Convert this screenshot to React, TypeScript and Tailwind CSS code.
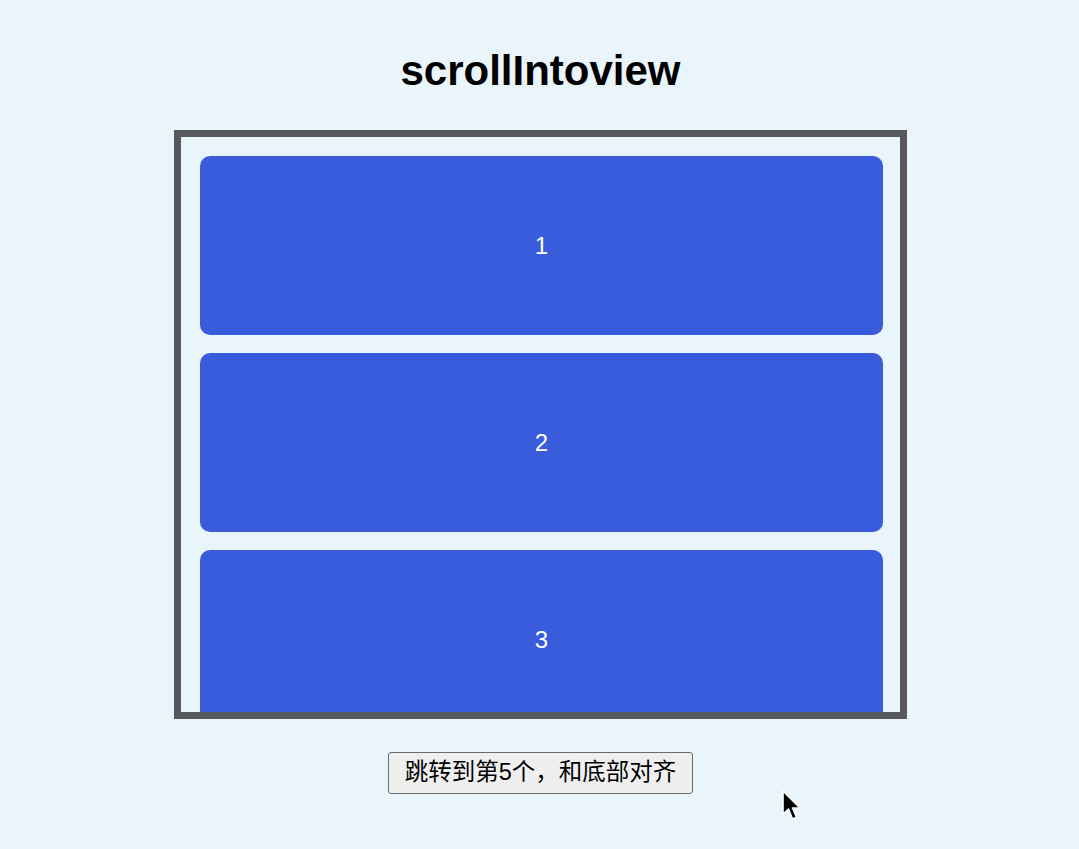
import { useRef } from 'react';

const items = [1, 2, 3, 4, 5, 6];

export default function App() {
  const boxRef = useRef<HTMLDivElement>(null);

  const jump = () => {
    const el = boxRef.current?.querySelector('[data-idx="5"]');
    el?.scrollIntoView({ block: 'end', behavior: 'smooth' });
  };

  return (
    <div className="relative min-h-[849px] bg-[#eaf4fb] flex flex-col items-center font-['Liberation_Sans','Noto_Sans_CJK_SC',sans-serif]">
      <h1 className="mt-[44px] ml-[2px] text-[42px] leading-[54px] font-bold text-black">scrollIntoview</h1>

      <div
        ref={boxRef}
        className="mt-[32px] ml-[2px] w-[733px] h-[589px] border-[7px] border-[#58595c] overflow-hidden py-[19px] pl-[19px] pr-[17px] flex flex-col gap-[18px]"
      >
        {items.map((n) => (
          <div
            key={n}
            data-idx={n}
            className="shrink-0 h-[179px] rounded-[10px] bg-[#385cdb] flex items-center justify-center text-white text-[24px]"
          >
            {n}
          </div>
        ))}
      </div>

      <button
        onClick={jump}
        className="mt-[33px] ml-[2px] h-[42px] px-[16px] border border-[#6b6b6b] rounded-[3px] bg-[#efefef] text-[23.5px] leading-none text-black"
      >
        跳转到第5个，和底部对齐
      </button>

      <svg className="absolute left-[781px] top-[790px]" width="22" height="32" viewBox="0 0 22 32">
        <path d="M2 1 L2 24 L7.5 19 L11.5 29 L15.5 27.3 L11.5 18 L19 18 Z" fill="#000" stroke="#fff" strokeWidth="1.6" strokeLinejoin="round" />
      </svg>
    </div>
  );
}
